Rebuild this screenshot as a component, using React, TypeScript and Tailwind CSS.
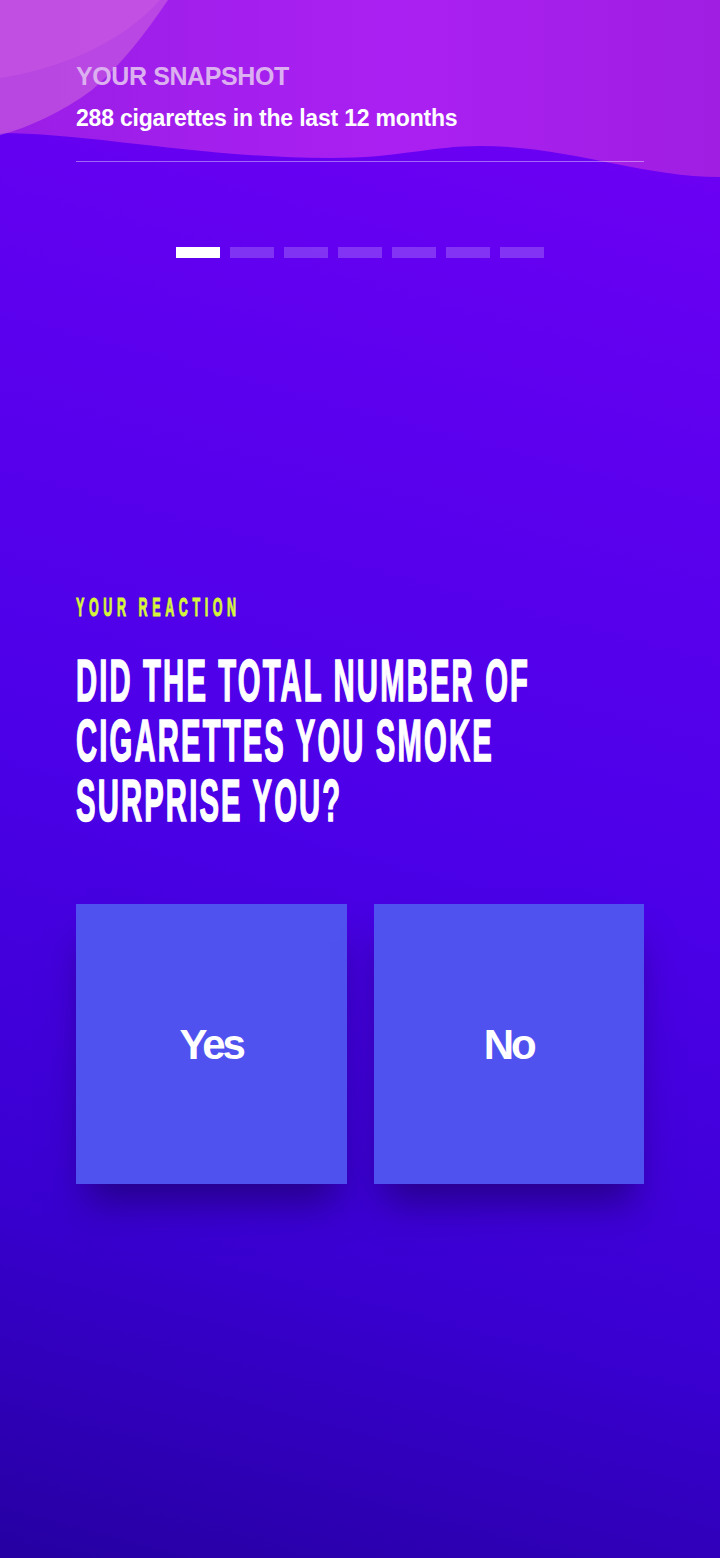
import React from 'react';

const steps = [true, false, false, false, false, false, false];

function TopWave() {
  return (
    <svg
      className="absolute left-0 top-0 h-[200px] w-[720px]"
      viewBox="0 0 720 200"
      preserveAspectRatio="none"
      aria-hidden="true"
    >
      <defs>
        <linearGradient id="waveFill" x1="0" y1="0" x2="1" y2="0">
          <stop offset="0" stopColor="#9a1ee6" />
          <stop offset="0.55" stopColor="#aa20f2" />
          <stop offset="1" stopColor="#a01ee2" />
        </linearGradient>
      </defs>
      <path
        d="M0,0 H720 V177 C640,177 570,146 480,146 C430,146 400,158 330,158 C200,158 90,133 0,133 Z"
        fill="url(#waveFill)"
      />
      <path
        d="M0,0 H168 C145,34 122,64 92,90 C62,112 30,127 0,135 Z"
        fill="#c458e0"
        opacity="0.7"
      />
      <path d="M0,0 H160 C128,36 74,66 0,78 Z" fill="#cc5ce2" opacity="0.45" />
    </svg>
  );
}

export default function App() {
  return (
    <div className="relative min-h-[1558px] w-full overflow-hidden bg-[linear-gradient(195deg,#7400f6_0%,#5c00ee_28%,#4c00e8_52%,#3a00d2_78%,#2600a2_100%)] font-['Liberation_Sans',Arial,sans-serif]">
      <TopWave />

      <div className="relative px-[76px]">
        {/* Snapshot summary */}
        <header className="pt-[61px]">
          <p className="text-[25px] font-bold leading-[30px] tracking-[-0.4px] text-[#dcb0f0]">
            YOUR SNAPSHOT
          </p>
          <p className="mt-[13px] text-[23px] font-bold leading-[28px] tracking-[-0.2px] text-white">
            288 cigarettes in the last 12 months
          </p>
          <div className="mt-[29px] h-px bg-white/40" />
        </header>

        {/* Step indicator */}
        <div className="mt-[85px] flex justify-center gap-[10px]">
          {steps.map((active, i) => (
            <span
              key={i}
              className={active ? 'h-[11px] w-[44px] bg-white' : 'h-[11px] w-[44px] bg-white/20'}
            />
          ))}
        </div>

        {/* Question */}
        <p className="mt-[337px] origin-left scale-x-50 whitespace-nowrap text-[25px] font-bold leading-[25px] tracking-[9.2px] text-[#d6f53a] [-webkit-text-stroke:1px_#d6f53a]">
          YOUR REACTION
        </p>
        <h1 className="mt-[31px] flex origin-left scale-x-50 flex-col whitespace-nowrap text-[58.5px] font-bold leading-[60px] tracking-[4.3px] text-white [-webkit-text-stroke:1.5px_#fff]">
          <span>DID THE TOTAL NUMBER OF</span>
          <span>CIGARETTES YOU SMOKE</span>
          <span>SURPRISE YOU?</span>
        </h1>

        {/* Answers */}
        <div className="mt-[73px] grid grid-cols-2 gap-[27px]">
          {['Yes', 'No'].map(label => (
            <button
              key={label}
              type="button"
              className="flex h-[280px] items-center justify-center bg-[#5052f0] text-[42px] font-bold tracking-[-3px] text-white shadow-[0_28px_36px_-10px_rgba(24,0,96,0.65)]"
            >
              {label}
            </button>
          ))}
        </div>
      </div>
    </div>
  );
}
